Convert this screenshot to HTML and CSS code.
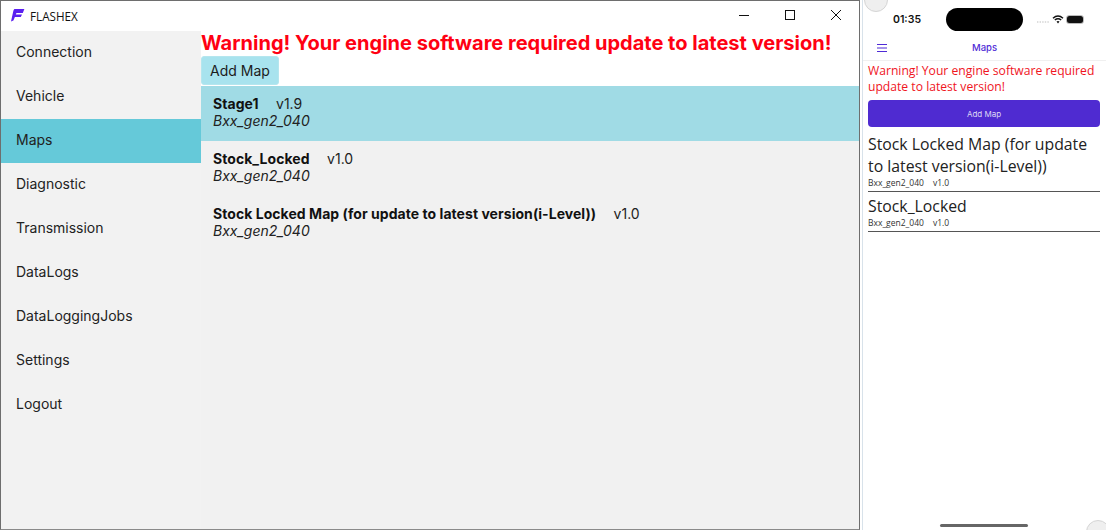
FILE: index.html
```html
<!DOCTYPE html>
<html lang="en">
<head>
<meta charset="utf-8">
<title>FLASHEX</title>
<link rel="stylesheet" href="styles.css">
</head>
<body>
<div class="screen">
  <div class="window">
    <header class="titlebar">
      <svg class="logo" width="14" height="13" viewBox="0 0 14 13"><path d="M3.4 0H13.4L11.8 4H6.2C5.5 4 5.2 4.3 5 5L4.8 5.5H11L9.8 8H3.9L2.4 11.6L0 12.6L2.2 2.4C2.4 1.2 2.8 .5 3.4 0Z" fill="#5b1ff0"/></svg>
      <span class="apptitle">FLASHEX</span>
      <div class="winctrls">
        <svg class="winbtn" width="46" height="30" viewBox="0 0 46 30"><path d="M18 15.5H28" stroke="#111" stroke-width="1"/></svg>
        <svg class="winbtn" width="46" height="30" viewBox="0 0 46 30"><rect x="18.5" y="10.5" width="9" height="9" fill="none" stroke="#111"/></svg>
        <svg class="winbtn" width="46" height="30" viewBox="0 0 46 30"><path d="M18 10L28 20M28 10L18 20" stroke="#111" fill="none"/></svg>
      </div>
    </header>
    <div class="winbody">
      <nav class="sidebar">
        <a class="navitem">Connection</a>
        <a class="navitem">Vehicle</a>
        <a class="navitem active">Maps</a>
        <a class="navitem">Diagnostic</a>
        <a class="navitem">Transmission</a>
        <a class="navitem">DataLogs</a>
        <a class="navitem">DataLoggingJobs</a>
        <a class="navitem">Settings</a>
        <a class="navitem">Logout</a>
      </nav>
      <main class="content">
        <h1 class="warning">Warning! Your engine software required update to latest version!</h1>
        <button class="addmap">Add Map</button>
        <ul class="maplist">
          <li class="mapitem selected">
            <div class="mapline"><b class="mapname">Stage1</b><span class="mapver">v1.9</span></div>
            <i class="mapcar">Bxx_gen2_040</i>
          </li>
          <li class="mapitem">
            <div class="mapline"><b class="mapname">Stock_Locked</b><span class="mapver">v1.0</span></div>
            <i class="mapcar">Bxx_gen2_040</i>
          </li>
          <li class="mapitem">
            <div class="mapline"><b class="mapname">Stock Locked Map (for update to latest version(i-Level))</b><span class="mapver">v1.0</span></div>
            <i class="mapcar">Bxx_gen2_040</i>
          </li>
        </ul>
      </main>
    </div>
  </div>
  <div class="phone">
    <span class="blob blob-top"></span>
    <div class="statusbar">
      <span class="clock">01:35</span>
      <span class="island"></span>
      <span class="status-icons">
        <svg class="signal" width="12" height="2" viewBox="0 0 12 2"><path d="M0 1H12" stroke="#bdbdbd" stroke-width="1.2" stroke-dasharray="1.4 1.2"/></svg>
        <svg width="12" height="9" viewBox="0 0 12 9"><path d="M1 3.2C4 .6 8 .6 11 3.2M2.8 5C4.8 3.4 7.2 3.4 9.2 5" stroke="#111" stroke-width="1.5" fill="none"/><path d="M4.5 6.5L6 8.5L7.5 6.5C6.6 5.8 5.4 5.8 4.5 6.5Z" fill="#111"/></svg>
        <span class="battery"></span>
      </span>
    </div>
    <div class="appbar">
      <svg class="burger" width="10" height="8" viewBox="0 0 10 8"><path d="M0 .5H10M0 4H10M0 7.5H10" stroke="#4f2bd6" stroke-width="1"/></svg>
      <span class="apptitle-m">Maps</span>
    </div>
    <div class="phonebody">
      <p class="warning-m">Warning! Your engine software required update to latest version!</p>
      <button class="addmap-m">Add Map</button>
      <div class="mcard">
        <div class="mname">Stock Locked Map (for update to latest version(i-Level))</div>
        <div class="mmeta"><span>Bxx_gen2_040</span><span>v1.0</span></div>
      </div>
      <div class="mcard">
        <div class="mname">Stock_Locked</div>
        <div class="mmeta"><span>Bxx_gen2_040</span><span>v1.0</span></div>
      </div>
    </div>
    <span class="homebar"></span>
    <span class="blob blob-bottom"></span>
  </div>
</div>
</body>
</html>
```
FILE: styles.css
```css
* { box-sizing: border-box; }
html, body { margin: 0; padding: 0; background: #fff; }
.screen { display: flex; width: 1106px; height: 530px; overflow: hidden; background: #fff; }
.window {
  width: 860px; height: 530px; flex: none;
  display: flex; flex-direction: column;
  border: 1px solid #6e6e6e; border-bottom-color: #8a8a8a;
  background: #fff;
  font-family: Inter, "Liberation Sans", sans-serif;
}
.titlebar { height: 30px; flex: none; display: flex; align-items: center; padding-left: 10px; background: #fff; }
.logo { flex: none; margin-top: -2px; }
.apptitle { margin-left: 5px; font: 11.7px "Open Sans", "Noto Sans", sans-serif; color: #111; margin-top: -1px; }
.winctrls { margin-left: auto; display: flex; margin-top: -2px; }
.winbtn { display: block; }
.winbody { flex: 1; display: flex; min-height: 0; }
.sidebar { width: 200px; flex: none; background: #f2f2f2; display: flex; flex-direction: column; }
.navitem { height: 44px; flex: none; display: flex; align-items: center; padding: 0 0 4px 15px; font-size: 14px; color: #222; }
.navitem.active { background: #65c9d9; }
.content { flex: 1; min-width: 0; display: flex; flex-direction: column; align-items: flex-start; background: #fff; }
.warning { margin: 0; height: 25px; font-size: 20.03px; line-height: 25px; font-weight: 700; color: #ff0012; white-space: nowrap; }
.addmap {
  height: 29px; width: 78px; padding: 0; margin: 0;
  border: 1px solid #b5e6ee; border-radius: 3px; background: #a8e3ee;
  font: 14px Inter, sans-serif; color: #1c1c1c;
}
.maplist { list-style: none; margin: 1px 0 0; padding: 0; width: 100%; flex: 1; background: #f1f1f1; }
.mapitem { height: 55px; padding: 9px 12px 0; font-size: 14px; line-height: 17px; color: #111; }
.mapitem.selected { background: #a0dbe5; }
.mapline { display: flex; gap: 17.5px; white-space: nowrap; }
.mapname { font-weight: 700; letter-spacing: .05px; }
.mapver { font-weight: 400; color: #222; }
.mapcar { display: block; font-style: italic; color: #222; }
.phone {
  position: relative; flex: 1; height: 530px; margin-left: 2px;
  border-left: 1px solid #d8e2ea;
  background: #fff; font-family: "Open Sans", "Noto Sans", sans-serif;
  display: flex; flex-direction: column;
}
.blob { position: absolute; width: 24px; height: 24px; border-radius: 50%; background: #efefef; border: 1px solid #d5d5d5; }
.blob-top { left: 1px; top: -12px; }
.blob-bottom { right: -4px; bottom: -14px; }
.statusbar { height: 37px; flex: none; display: flex; align-items: center; padding: 2px 0 0 30px; }
.clock { font: 600 10.5px Inter, sans-serif; color: #111; }
.island { width: 77px; height: 23px; border-radius: 12px; background: #000; margin-left: 25px; }
.status-icons { margin-left: 14px; display: flex; align-items: center; gap: 3px; }
.signal { margin-top: 4px; }
.battery { width: 16px; height: 7px; border-radius: 2.5px; background: #111; box-shadow: 0 0 0 1px #bbb; }
.appbar { height: 24px; flex: none; display: flex; align-items: center; justify-content: center; position: relative; border-bottom: 1px solid #f0f0f0; }
.burger { position: absolute; left: 14px; top: 7px; }
.apptitle-m { font: 500 9.5px Inter, sans-serif; color: #4f2bd6; margin-top: -2px; }
.phonebody { padding: 0 5px; }
.warning-m { margin: 0; padding-top: 2px; font-size: 12.15px; line-height: 16px; color: #f0141e; }
.addmap-m {
  display: block; width: 232px; height: 27px; margin: 5px 0 6px; padding: 0;
  border: 0; border-radius: 4px; background: #4f2bd1; color: #ddd8f5;
  font: 8px Inter, sans-serif;
}
.mcard { width: 232px; border-bottom: 1px solid #555; padding-bottom: 3px; margin-bottom: 3px; }
.mname { font-size: 15.8px; line-height: 22px; color: #222; }
.mmeta { display: flex; gap: 9px; font-size: 8.5px; line-height: 11px; color: #333; }
.homebar { position: absolute; left: 77px; bottom: 3px; width: 88px; height: 3px; border-radius: 2px; background: #666; }
```
